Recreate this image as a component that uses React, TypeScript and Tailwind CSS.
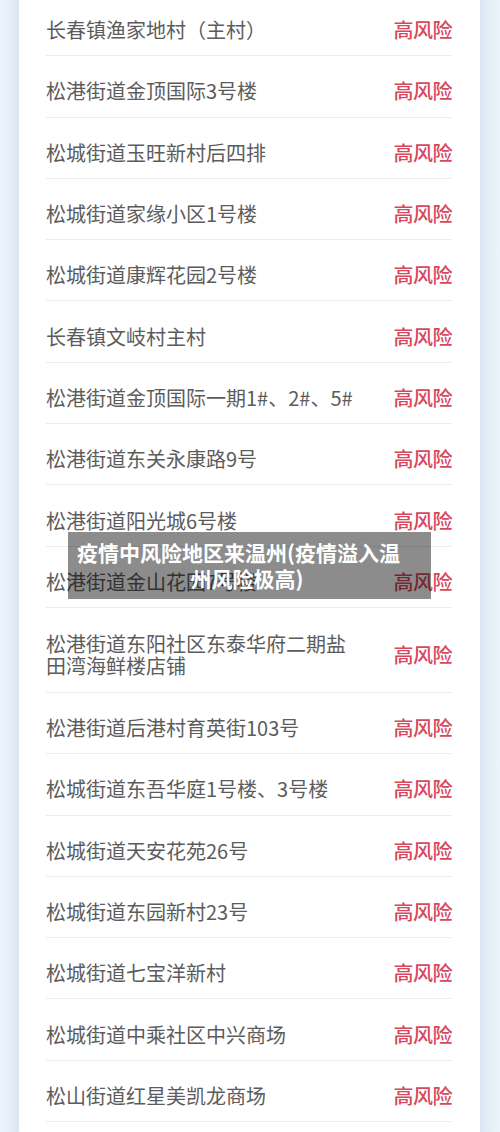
import React from "react";

const rows: string[] = [
  "长春镇渔家地村（主村）",
  "松港街道金顶国际3号楼",
  "松城街道玉旺新村后四排",
  "松城街道家缘小区1号楼",
  "松城街道康辉花园2号楼",
  "长春镇文岐村主村",
  "松港街道金顶国际一期1#、2#、5#",
  "松港街道东关永康路9号",
  "松港街道阳光城6号楼",
  "松港街道金山花园7号楼",
  "松港街道东阳社区东泰华府二期盐田湾海鲜楼店铺",
  "松港街道后港村育英街103号",
  "松城街道东吾华庭1号楼、3号楼",
  "松城街道天安花苑26号",
  "松城街道东园新村23号",
  "松城街道七宝洋新村",
  "松城街道中乘社区中兴商场",
  "松山街道红星美凯龙商场",
];

export default function App() {
  return (
    <div
      className="relative w-[500px] h-[1132px] overflow-hidden bg-[#e9f2fa] flex"
      style={{ fontFamily: '"Noto Sans CJK SC", "Noto Sans", sans-serif' }}
    >
      <div className="w-[19px] shrink-0 bg-gradient-to-r from-[#edf4fb] via-[#e6eff8] to-[#d9e6f2]" />
      <div className="w-[461px] shrink-0 bg-white pl-[27px] pr-[28px]">
        <div className="-mt-[5px] flex flex-col">
          {rows.map((r, i) => (
            <div
              key={i}
              className={`flex items-center justify-between border-b-[1.5px] border-[#ececec] pt-[10px] ${
                r.length > 20 ? "h-[85px]" : "h-[61.3px]"
              }`}
            >
              <span className="w-[310px] text-[20px] leading-[22px] text-[#5c5c5c]">{r}</span>
              <span className="text-[20px] leading-[22px] font-medium text-[#d8485c] tracking-[-0.5px]">高风险</span>
            </div>
          ))}
        </div>
      </div>
      <div className="w-[20px] shrink-0 bg-gradient-to-r from-[#d9e6f2] via-[#e6eff8] to-[#edf4fb]" />

      <div className="absolute left-[68px] top-[532px] w-[363px] h-[67px] bg-black/45 px-[9px] pt-[7px] text-white font-bold text-[21px] leading-[26px]">
        <div className="whitespace-nowrap">疫情中风险地区来温州(疫情溢入温</div>
        <div className="text-center pr-[5px]">州风险极高)</div>
      </div>
    </div>
  );
}
